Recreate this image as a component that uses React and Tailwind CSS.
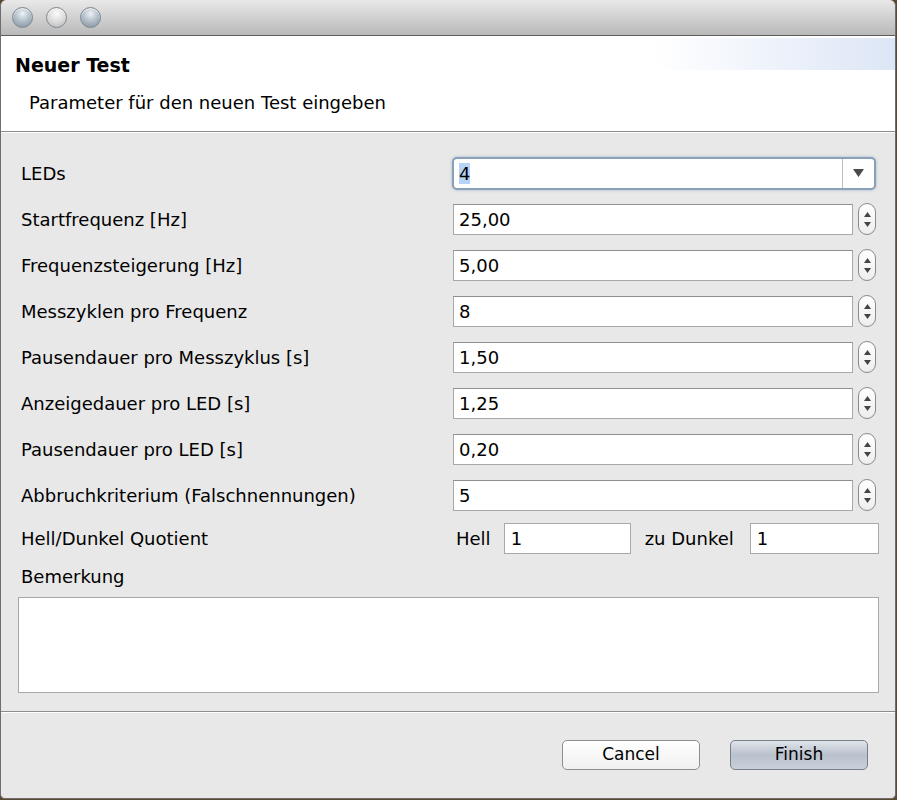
import { useState } from 'react';

const rows = [
  { label: 'Startfrequenz [Hz]', value: '25,00' },
  { label: 'Frequenzsteigerung [Hz]', value: '5,00' },
  { label: 'Messzyklen pro Frequenz', value: '8' },
  { label: 'Pausendauer pro Messzyklus [s]', value: '1,50' },
  { label: 'Anzeigedauer pro LED [s]', value: '1,25' },
  { label: 'Pausendauer pro LED [s]', value: '0,20' },
  { label: 'Abbruchkriterium (Falschnennungen)', value: '5' },
];

const font = { fontFamily: '"DejaVu Sans", "Liberation Sans", sans-serif' };

const TrafficLight = ({ light }) => (
  <div
    className={`w-[21px] h-[21px] rounded-full border border-[#7d8790] shadow-[inset_0_1px_1px_rgba(255,255,255,0.8)] ${
      light
        ? 'bg-[radial-gradient(circle_at_50%_30%,#fbfbfb_0%,#dcdcdc_50%,#b4b4b4_100%)]'
        : 'bg-[radial-gradient(circle_at_50%_30%,#eef2f5_0%,#b4c0ca_45%,#7f8d99_100%)]'
    }`}
  />
);

const Spinner = () => (
  <div className="w-[18px] h-[32px] rounded-[9px] border border-[#8a8a8a] bg-gradient-to-b from-white to-[#eeeeee] flex flex-col items-center justify-center gap-[5px]">
    <svg width="7" height="5" viewBox="0 0 7 5"><path d="M3.5 0 L7 5 L0 5 Z" fill="#444" /></svg>
    <svg width="7" height="5" viewBox="0 0 7 5"><path d="M0 0 L7 0 L3.5 5 Z" fill="#444" /></svg>
  </div>
);

const NumberRow = ({ label, value }) => {
  const [v, setV] = useState(value);
  return (
    <div className="flex items-center h-[46px]">
      <div className="w-[452px] pl-[20px] text-[18px] text-black">{label}</div>
      <input
        value={v}
        onChange={(e) => setV(e.target.value)}
        className="w-[400px] h-[31px] border border-[#a8a8a8] border-t-[#8f8f8f] bg-white px-[5px] text-[18px] outline-none"
        style={font}
      />
      <div className="ml-[5px]">
        <Spinner />
      </div>
    </div>
  );
};

export default function App() {
  const [hell, setHell] = useState('1');
  const [dunkel, setDunkel] = useState('1');

  return (
    <div className="w-[897px] h-[800px] bg-[#5a4a34] overflow-hidden" style={font}>
      <div className="w-[896px] h-[799px] bg-[#e8e8e8] rounded-t-[6px] rounded-b-[5px] border border-[#6e6e6e] border-t-0 flex flex-col overflow-hidden">
        {/* title bar */}
        <div className="h-[37px] bg-gradient-to-b from-[#e9e9e9] to-[#b9b9b9] rounded-t-[6px] flex items-center gap-[13px] pl-[11px] border-b border-[#5d5d5d]">
          <TrafficLight />
          <TrafficLight light />
          <TrafficLight />
        </div>

        {/* header */}
        <div className="relative h-[98px] bg-white border-b border-[#8c8c8c]">
          <div className="absolute right-0 top-[2px] w-[240px] h-[32px] bg-gradient-to-r from-white to-[#dde6f6]" />
          <div className="relative pl-[14px] pt-[17px] text-[19px] font-bold text-black leading-[24px]">Neuer Test</div>
          <div className="relative pl-[28px] pt-[12px] text-[18px] text-black">Parameter für den neuen Test eingeben</div>
        </div>
        <div className="h-px bg-white" />

        {/* body */}
        <div className="flex-1 flex flex-col pt-[17px]">
          <div className="flex items-center h-[46px]">
            <div className="w-[451px] pl-[20px] text-[18px] text-black">LEDs</div>
            <div className="w-[424px] h-[33px] rounded-[5px] border-2 border-[#8ba0b9] shadow-[0_0_3px_#9fb3cc] bg-white flex items-center">
              <div className="flex-1 pl-[5px] text-[18px]">
                <span className="bg-[#b5d3f7]">4</span>
              </div>
              <div className="w-[32px] h-full border-l border-[#bdbdbd] flex items-center justify-center">
                <svg width="11" height="8" viewBox="0 0 11 8"><path d="M0 0 L11 0 L5.5 8 Z" fill="#4a4a4a" /></svg>
              </div>
            </div>
          </div>

          {rows.map((r) => (
            <NumberRow key={r.label} label={r.label} value={r.value} />
          ))}

          <div className="flex items-center h-[40px]">
            <div className="w-[455px] pl-[20px] text-[18px] text-black">Hell/Dunkel Quotient</div>
            <span className="text-[18px] text-black">Hell</span>
            <input
              value={hell}
              onChange={(e) => setHell(e.target.value)}
              className="ml-[13px] w-[127px] h-[31px] border border-[#a8a8a8] bg-white px-[6px] text-[18px] outline-none"
              style={font}
            />
            <span className="ml-[14px] text-[18px] text-black">zu Dunkel</span>
            <input
              value={dunkel}
              onChange={(e) => setDunkel(e.target.value)}
              className="ml-[16px] w-[129px] h-[31px] border border-[#a8a8a8] bg-white px-[6px] text-[18px] outline-none"
              style={font}
            />
          </div>

          <div className="pl-[20px] pt-[5px] text-[18px] text-black h-[39px]">Bemerkung</div>
          <textarea
            className="ml-[17px] w-[861px] h-[96px] border border-[#a8a8a8] bg-white resize-none outline-none"
          />
        </div>

        {/* footer */}
        <div className="mt-[18px] h-px bg-[#8c8c8c]" />
        <div className="h-px bg-white" />
        <div className="h-[86px] flex justify-end items-start pt-[27px] pr-[27px] gap-[30px]">
          <button className="w-[138px] h-[30px] rounded-[5px] border border-[#8e8e8e] bg-gradient-to-b from-white to-[#f0f0f0] text-[17px] text-black">
            Cancel
          </button>
          <button className="w-[138px] h-[30px] rounded-[5px] border border-[#76808c] bg-gradient-to-b from-[#e0e4ea] via-[#b9c1cc] to-[#c9d0da] text-[17px] text-black">
            Finish
          </button>
        </div>
      </div>
    </div>
  );
}
